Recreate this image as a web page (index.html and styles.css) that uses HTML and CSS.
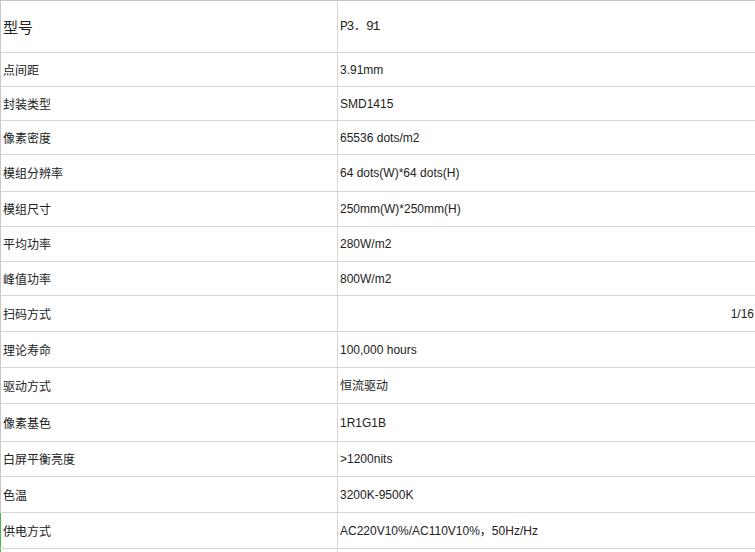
FILE: index.html
```html
<!DOCTYPE html>
<html lang="zh">
<head>
<meta charset="utf-8">
<title>参数</title>
<link rel="stylesheet" href="styles.css">
</head>
<body>
<table class="spec">
  <colgroup><col class="c-label"><col class="c-value"></colgroup>
  <tbody>
    <tr class="r1"><td class="label big">型号</td><td class="value mono">P3. 91</td></tr>
    <tr class="r2"><td class="label">点间距</td><td class="value">3.91mm</td></tr>
    <tr class="r3"><td class="label">封装类型</td><td class="value">SMD1415</td></tr>
    <tr class="r4"><td class="label">像素密度</td><td class="value">65536 dots/m2</td></tr>
    <tr class="r5"><td class="label">模组分辨率</td><td class="value">64 dots(W)*64 dots(H)</td></tr>
    <tr class="r6"><td class="label">模组尺寸</td><td class="value">250mm(W)*250mm(H)</td></tr>
    <tr class="r7"><td class="label">平均功率</td><td class="value">280W/m2</td></tr>
    <tr class="r8"><td class="label">峰值功率</td><td class="value">800W/m2</td></tr>
    <tr class="r9"><td class="label">扫码方式</td><td class="value right">1/16</td></tr>
    <tr class="r10"><td class="label">理论寿命</td><td class="value">100,000 hours</td></tr>
    <tr class="r11"><td class="label">驱动方式</td><td class="value">恒流驱动</td></tr>
    <tr class="r12"><td class="label">像素基色</td><td class="value">1R1G1B</td></tr>
    <tr class="r13"><td class="label">白屏平衡亮度</td><td class="value">&gt;1200nits</td></tr>
    <tr class="r14"><td class="label">色温</td><td class="value">3200K-9500K</td></tr>
    <tr class="r15"><td class="label active">供电方式</td><td class="value">AC220V10%/AC110V10%，50Hz/Hz</td></tr>
    <tr class="r16"><td class="label active"></td><td class="value"></td></tr>
  </tbody>
</table>
</body>
</html>
```

FILE: styles.css
```css
html, body {
  margin: 0;
  padding: 0;
  background: #fff;
  overflow: hidden;
}
.spec {
  border-collapse: collapse;
  table-layout: fixed;
  width: 757px;
  font-family: "Liberation Sans", "Noto Sans CJK SC", sans-serif;
  color: #222;
}
.spec tr:first-child td {
  border-top: 1px solid #c4c4c4;
}
.c-label { width: 337px; }
.c-value { width: 420px; }
.spec td {
  border: 1px solid #d6d6d6;
  padding: 0 2px;
  vertical-align: middle;
  font-size: 12px;
  line-height: 14px;
  white-space: nowrap;
  overflow: hidden;
}
.spec td.label {
  font-family: "Noto Sans CJK SC", sans-serif;
  border-left-color: #c8c8c8;
}
.spec td.label.big {
  font-size: 15px;
  line-height: 18px;
}
.spec td.label.active {
  border-left: 1px solid #4cb84c;
}
.spec td.value { padding-left: 2px; }
.spec td.mono {
  font-family: "Liberation Mono", "Noto Sans CJK SC", monospace;
  font-size: 13px;
  letter-spacing: -1.3px;
}
.spec td.right {
  text-align: right;
  padding-right: 3px;
}
.r1 { height: 52px; }
.r2, .r3, .r4 { height: 34px; }
.r5 { height: 37px; }
.r6, .r7 { height: 35px; }
.r8 { height: 34px; }
.r9, .r10, .r11 { height: 36px; }
.r12 { height: 38px; }
.r13 { height: 35px; }
.r14, .r15 { height: 36px; }
.r16 { height: 36px; }
```
